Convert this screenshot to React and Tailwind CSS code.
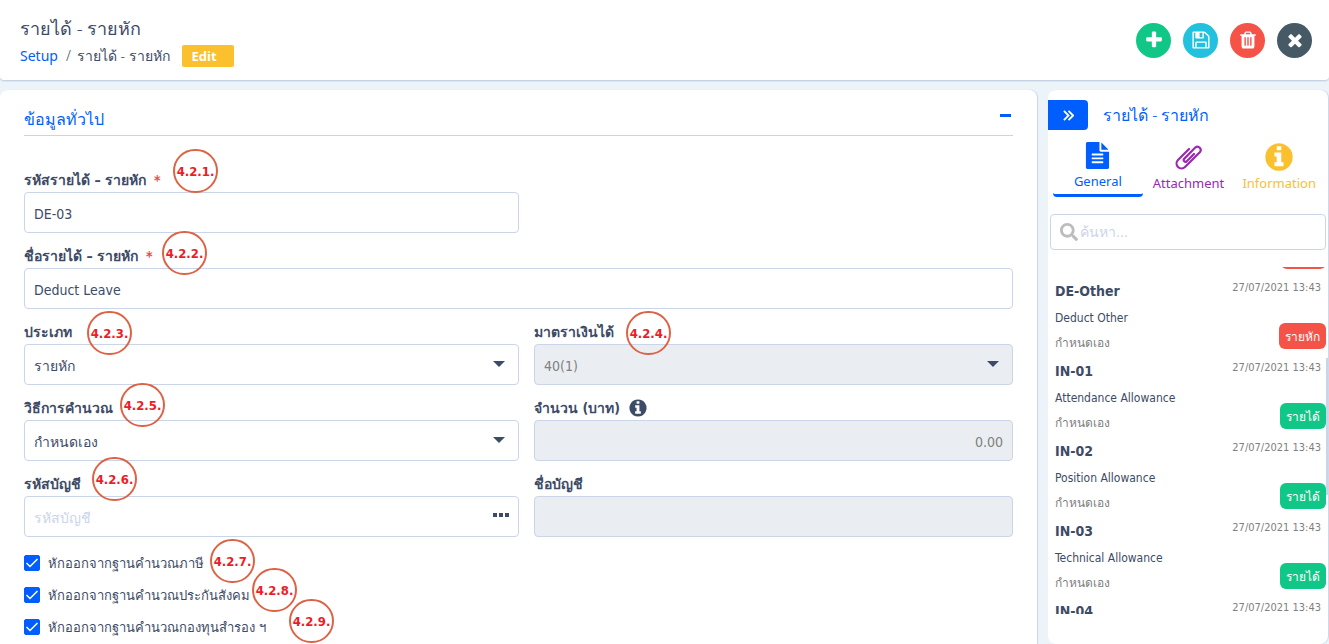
import { useState } from "react";
import { FaSearch } from "react-icons/fa";

const heading = "font-['Noto_Sans',sans-serif]";

/* Icons */
function Icon({ d, className, viewBox = "0 0 1792 1792" }) {
  return (
    <svg viewBox={viewBox} className={className} fill="currentColor" aria-hidden="true">
      <path d={d} />
    </svg>
  );
}

function PaperclipIcon() {
  return (
    <svg viewBox="0 0 29 29" className="size-[29px]" fill="none" stroke="currentColor" strokeWidth="2.2" strokeLinecap="round" aria-hidden="true">
      <path d="M15 6L4 17a4.950 4.950 0 0 0 7 7L26 9a3.300 3.300 0 0 0-4.500-4.700L10 16a1.800 1.800 0 0 0 2.500 2.500L20 11" />
    </svg>
  );
}

const icons = {
  plus: "M1600 736v192q0 40-28 68t-68 28h-416v416q0 40-28 68t-68 28h-192q-40 0-68-28t-28-68v-416h-416q-40 0-68-28t-28-68v-192q0-40 28-68t68-28h416v-416q0-40 28-68t68-28h192q40 0 68 28t28 68v416h416q40 0 68 28t28 68z",
  save: "M512 1536h768v-384h-768v384zm896 0h128v-896q0-14-10-38.500t-20-34.500l-281-281q-10-10-34-20t-39-10v416q0 40-28 68t-68 28h-576q-40 0-68-28t-28-68v-416h-128v1280h128v-416q0-40 28-68t68-28h832q40 0 68 28t28 68v416zm-384-928v-320q0-13-9.500-22.500t-22.500-9.500h-192q-13 0-22.500 9.500t-9.500 22.500v320q0 13 9.500 22.500t22.500 9.500h192q13 0 22.500-9.500t9.500-22.500zm640 32v928q0 40-28 68t-68 28h-1344q-40 0-68-28t-28-68v-1344q0-40 28-68t68-28h928q40 0 88 20t76 48l280 280q28 28 48 76t20 88z",
  trash: "M704 1376v-704q0-14-9-23t-23-9h-64q-14 0-23 9t-9 23v704q0 14 9 23t23 9h64q14 0 23-9t9-23zm256 0v-704q0-14-9-23t-23-9h-64q-14 0-23 9t-9 23v704q0 14 9 23t23 9h64q14 0 23-9t9-23zm256 0v-704q0-14-9-23t-23-9h-64q-14 0-23 9t-9 23v704q0 14 9 23t23 9h64q14 0 23-9t9-23zm-544-992h448l-48-117q-7-9-17-11h-317q-10 2-17 11zm928 32v64q0 14-9 23t-23 9h-96v948q0 83-47 143.500t-113 60.500h-832q-66 0-113-58.500t-47-141.500v-952h-96q-14 0-23-9t-9-23v-64q0-14 9-23t23-9h309l70-167q15-37 54-63t79-26h320q40 0 79 26t54 63l70 167h309q14 0 23 9t9 23z",
  close: "M1490 1322q0 40-28 68l-136 136q-28 28-68 28t-68-28l-294-294-294 294q-28 28-68 28t-68-28l-136-136q-28-28-28-68t28-68l294-294-294-294q-28-28-28-68t28-68l136-136q28-28 68-28t68 28l294 294 294-294q28-28 68-28t68 28l136 136q28 28 28 68t-28 68l-294 294 294 294q28 28 28 68z",
  info: "M1152 1376v-160q0-14-9-23t-23-9h-96v-512q0-14-9-23t-23-9h-320q-14 0-23 9t-9 23v160q0 14 9 23t23 9h96v320h-96q-14 0-23 9t-9 23v160q0 14 9 23t23 9h448q14 0 23-9t9-23zm-128-896v-160q0-14-9-23t-23-9h-192q-14 0-23 9t-9 23v160q0 14 9 23t23 9h192q14 0 23-9t9-23zm640 416q0 209-103 385.500t-279.500 279.500-385.500 103-385.500-103-279.500-279.500-103-385.500 103-385.500 279.500-279.500 385.500-103 385.500 103 279.500 279.500 103 385.500z",
  file: "M1596 476q14 14 28 36h-472v-472q22 14 36 28zm-476 164h544v1056q0 40-28 68t-68 28h-1344q-40 0-68-28t-28-68v-1600q0-40 28-68t68-28h800v544q0 40 28 68t68 28zm160 736v-64q0-14-9-23t-23-9h-704q-14 0-23 9t-9 23v64q0 14 9 23t23 9h704q14 0 23-9t9-23zm0-256v-64q0-14-9-23t-23-9h-704q-14 0-23 9t-9 23v64q0 14 9 23t23 9h704q14 0 23-9t9-23zm0-256v-64q0-14-9-23t-23-9h-704q-14 0-23 9t-9 23v64q0 14 9 23t23 9h704q14 0 23-9t9-23z",
};

const actions = [
  { label: "Add", icon: icons.plus, color: "bg-[#11c788]" },
  { label: "Save", icon: icons.save, color: "bg-[#22c1dd]" },
  { label: "Delete", icon: icons.trash, color: "bg-[#f55348]" },
  { label: "Close", icon: icons.close, color: "bg-[#455a64]" },
];

const items = [
  { color: "bg-[#f55348]" },
  { code: "DE-Other", name: "Deduct Other", method: "กำหนดเอง", date: "27/07/2021 13:43", type: "รายหัก", color: "bg-[#f55348]" },
  { code: "IN-01", name: "Attendance Allowance", method: "กำหนดเอง", date: "27/07/2021 13:43", type: "รายได้", color: "bg-[#11c788]" },
  { code: "IN-02", name: "Position Allowance", method: "กำหนดเอง", date: "27/07/2021 13:43", type: "รายได้", color: "bg-[#11c788]" },
  { code: "IN-03", name: "Technical Allowance", method: "กำหนดเอง", date: "27/07/2021 13:43", type: "รายได้", color: "bg-[#11c788]" },
  { code: "IN-04", date: "27/07/2021 13:43" },
];

// numbered callouts that float over the form
const callouts = [
  { no: "4.2.1.", pos: "left-[173px] top-[59px]" },
  { no: "4.2.2.", pos: "left-[162px] top-[141px]" },
  { no: "4.2.3.", pos: "left-[87px] top-[221px]" },
  { no: "4.2.4.", pos: "left-[626px] top-[221px]" },
  { no: "4.2.5.", pos: "left-[120px] top-[293px]" },
  { no: "4.2.6.", pos: "left-[92px] top-[367px]" },
  { no: "4.2.7.", pos: "left-[210px] top-[449px]" },
  { no: "4.2.8.", pos: "left-[252px] top-[478px]" },
  { no: "4.2.9.", pos: "left-[289px] top-[509px]" },
];

const control =
  "block w-full h-[41px] rounded border border-[#cbd5e8] bg-white px-[9px] pt-[2px] text-sm text-[#3d4b66] outline-none placeholder:text-[#cbd5e8] focus:border-[#005eff] disabled:bg-[#eaeef2] disabled:text-[#808080] disabled:opacity-100";

function Field({ id, label, required, extra, className, children }) {
  return (
    <div className={className}>
      <div className="flex h-[35px] items-end gap-2 pb-[2px] text-sm leading-5 font-bold text-[#3d4b66]">
        <label htmlFor={id}>
          {label}
          {required && <span className="ml-2 text-[#f5483c]">*</span>}
        </label>
        {extra}
      </div>
      <div className="relative">{children}</div>
    </div>
  );
}

function SelectBox({ id, value, disabled }) {
  return (
    <>
      <select id={id} disabled={disabled} className={`${control} appearance-none`}>
        <option>{value}</option>
      </select>
      <svg viewBox="0 0 12 6" className="absolute right-[14px] top-[17px] h-[6px] w-3 pointer-events-none" fill="#3d4b66">
        <path d="M0 0h12L6 6z" />
      </svg>
    </>
  );
}

function CheckRow({ label }) {
  const [checked, setChecked] = useState(true);
  return (
    <label className="flex h-8 items-center gap-2 text-[13px] text-[#3d4b66]">
      <span className="relative block size-4">
        <input
          type="checkbox"
          checked={checked}
          onChange={(e) => setChecked(e.target.checked)}
          className="block size-4 appearance-none rounded-xs border border-[#cbd5e8] checked:border-[#005eff] checked:bg-[#005eff]"
        />
        {checked && (
          <svg viewBox="0 0 16 16" className="absolute inset-0 size-4 pointer-events-none" fill="none" stroke="white" strokeWidth="1.5">
            <path d="M2.500 8l3.500 3.500 7.500-7.500" />
          </svg>
        )}
      </span>
      <span className="pt-[2px]">{label}</span>
    </label>
  );
}

export default function App() {
  const [code, setCode] = useState("DE-03");
  const [name, setName] = useState("Deduct Leave");

  return (
    <div className="flex min-h-screen flex-col gap-[10px] bg-[#ecf4f9] font-['DejaVu_Sans_Condensed','DejaVu_Sans',sans-serif] text-[#3d4b66]">
      {/* Top bar */}
      <header className={`flex h-20 items-center justify-between rounded-b bg-white pl-5 pr-[17px] shadow-[0_1px_2px_#b8c6dc] ${heading}`}>
        <div className="pt-1">
          <h1 className="text-lg leading-7 font-light">รายได้ - รายหัก</h1>
          <nav className="flex h-7 items-center text-sm">
            <a href="#setup" className="text-[#005eff]">Setup</a>
            <span className="ml-2 font-light">/</span>
            <span className="ml-[6px] font-light">รายได้ - รายหัก</span>
            <span className="ml-3 h-[22px] w-[52px] rounded-xs bg-[#fbc02d] pl-[10px] text-[13px] leading-[22px] font-bold text-white">Edit</span>
          </nav>
        </div>
        <div className="flex gap-3">
          {actions.map((a) => (
            <button key={a.label} aria-label={a.label} className={`flex size-[35px] items-center justify-center rounded-full text-white ${a.color}`}>
              <Icon d={a.icon} className="size-5" />
            </button>
          ))}
        </div>
      </header>

      <div className="flex flex-1 gap-[11px] pr-px">
        {/* Form */}
        <main className="relative flex-1 rounded-t-lg bg-white px-6 shadow-[1px_0_1px_#cbd5e8]">
          <div className="flex h-[46px] items-center justify-between border-b border-[#cbd5e0] pt-3">
            <h2 className={`text-base font-light text-[#005eff] ${heading}`}>ข้อมูลทั่วไป</h2>
            <button aria-label="Collapse" className="flex h-6 w-4 items-center justify-center pb-[6px]">
              <span className="block h-[3px] w-[11px] bg-[#005eff]" />
            </button>
          </div>

          <form className="grid grid-cols-[495fr_479fr] gap-x-[15px] pt-[21px]">
            <Field id="code" label="รหัสรายได้ – รายหัก" required>
              <input id="code" value={code} onChange={(e) => setCode(e.target.value)} className={control} />
            </Field>
            <Field id="name" label="ชื่อรายได้ – รายหัก" required className="col-span-2">
              <input id="name" value={name} onChange={(e) => setName(e.target.value)} className={control} />
            </Field>
            <Field id="type" label="ประเภท">
              <SelectBox id="type" value="รายหัก" />
            </Field>
            <Field id="section" label="มาตราเงินได้">
              <SelectBox id="section" value="40(1)" disabled />
            </Field>
            <Field id="method" label="วิธีการคำนวณ">
              <SelectBox id="method" value="กำหนดเอง" />
            </Field>
            <Field id="amount" label="จำนวน (บาท)" extra={<Icon d={icons.info} className="size-5" />}>
              <input id="amount" defaultValue="0.00" disabled className={`${control} text-right`} />
            </Field>
            <Field id="account" label="รหัสบัญชี">
              <input id="account" placeholder="รหัสบัญชี" className={control} />
              <button type="button" aria-label="Browse" className="absolute right-[10px] top-4 flex h-[6px] items-center gap-[2px]">
                <span className="block size-1 bg-[#3d4b66]" />
                <span className="block size-1 bg-[#3d4b66]" />
                <span className="block size-1 bg-[#3d4b66]" />
              </button>
            </Field>
            <Field id="accountName" label="ชื่อบัญชี">
              <input id="accountName" disabled className={control} />
            </Field>
            <div className="col-span-2 pt-[10px]">
              <CheckRow label="หักออกจากฐานคำนวณภาษี" />
              <CheckRow label="หักออกจากฐานคำนวณประกันสังคม" />
              <CheckRow label="หักออกจากฐานคำนวณกองทุนสำรอง ฯ" />
            </div>
          </form>

          {callouts.map((c) => (
            <span
              key={c.no}
              className={`absolute flex h-11 w-[45px] items-center justify-center rounded-full border-2 border-[#dc6446] pt-px text-[13px] font-bold text-[#ee1c25] pointer-events-none ${c.pos}`}
            >
              {c.no}
            </span>
          ))}
        </main>

        {/* Side panel */}
        <aside className="w-[280px] self-stretch rounded-lg bg-white pt-[10px] shadow-[1px_0_1px_#cbd5e8]">
          <div className="flex h-[30px] items-center gap-[15px]">
            <button aria-label="Hide panel" className="flex h-[30px] w-10 items-center justify-center rounded-r bg-[#005eff] text-white">
              <svg viewBox="0 0 12 12" className="size-[11px]" fill="none" stroke="currentColor" strokeWidth="2">
                <path d="M1 1l5 5-5 5M6 1l5 5-5 5" />
              </svg>
            </button>
            <h2 className={`text-base font-light text-[#005eff] ${heading}`}>รายได้ - รายหัก</h2>
          </div>

          <div className={`flex h-[67px] gap-px pr-1 pl-[5px] text-[13px] ${heading}`}>
            <button className="flex flex-1 flex-col items-center rounded border-b-3 border-[#005eff] pt-3 text-[#005eff]">
              <Icon d={icons.file} className="size-[27px]" />
              <span className="mt-[2px] leading-5">General</span>
            </button>
            <button className="flex flex-1 flex-col items-center pt-[13px] text-[#9c27b0]">
              <PaperclipIcon />
              <span className="mt-px leading-5">Attachment</span>
            </button>
            <button className="flex flex-1 flex-col items-center pt-[11px] text-[#fbc02d]">
              <Icon d={icons.info} className="size-8" />
              <span className="leading-5">Information</span>
            </button>
          </div>

          <div className="mx-[2px] mt-[17px] flex h-9 items-center gap-[2px] rounded border border-[#cbd5e8] px-[9px]">
            <FaSearch className="size-[18px] shrink-0 text-[#bdbdbd]" />
            <input aria-label="ค้นหา" placeholder="ค้นหา..." className="w-full min-w-0 text-sm outline-none placeholder:text-[#cbd5e8]" />
          </div>

          <div className="relative mt-[17px] h-[347px] overflow-hidden">
            <ul className="-mt-[70px]">
              {items.map((item, i) => (
                <li key={i} className="flex h-20 justify-between pl-[7px] pr-[2px]">
                  <div>
                    <p className="h-[26px] text-sm leading-[29px] font-bold">{item.code}</p>
                    <p className="h-[26px] text-xs leading-[31px]">{item.name}</p>
                    <p className="text-xs leading-[29px] text-[#808080]">{item.method}</p>
                  </div>
                  <div className="flex flex-col items-end">
                    <time className="h-[46px] pr-[5px] text-[11px] leading-[21px] text-[#808080]">{item.date}</time>
                    {item.color && (
                      <span className={`h-[26px] min-w-[45px] rounded-md px-[6px] text-xs leading-[28px] text-white ${item.color}`}>
                        {item.type}
                      </span>
                    )}
                  </div>
                </li>
              ))}
            </ul>
            <div className="absolute right-0 top-[91px] h-[137px] w-[2px] bg-[#cbd5e8]" />
          </div>
        </aside>
      </div>
    </div>
  );
}
